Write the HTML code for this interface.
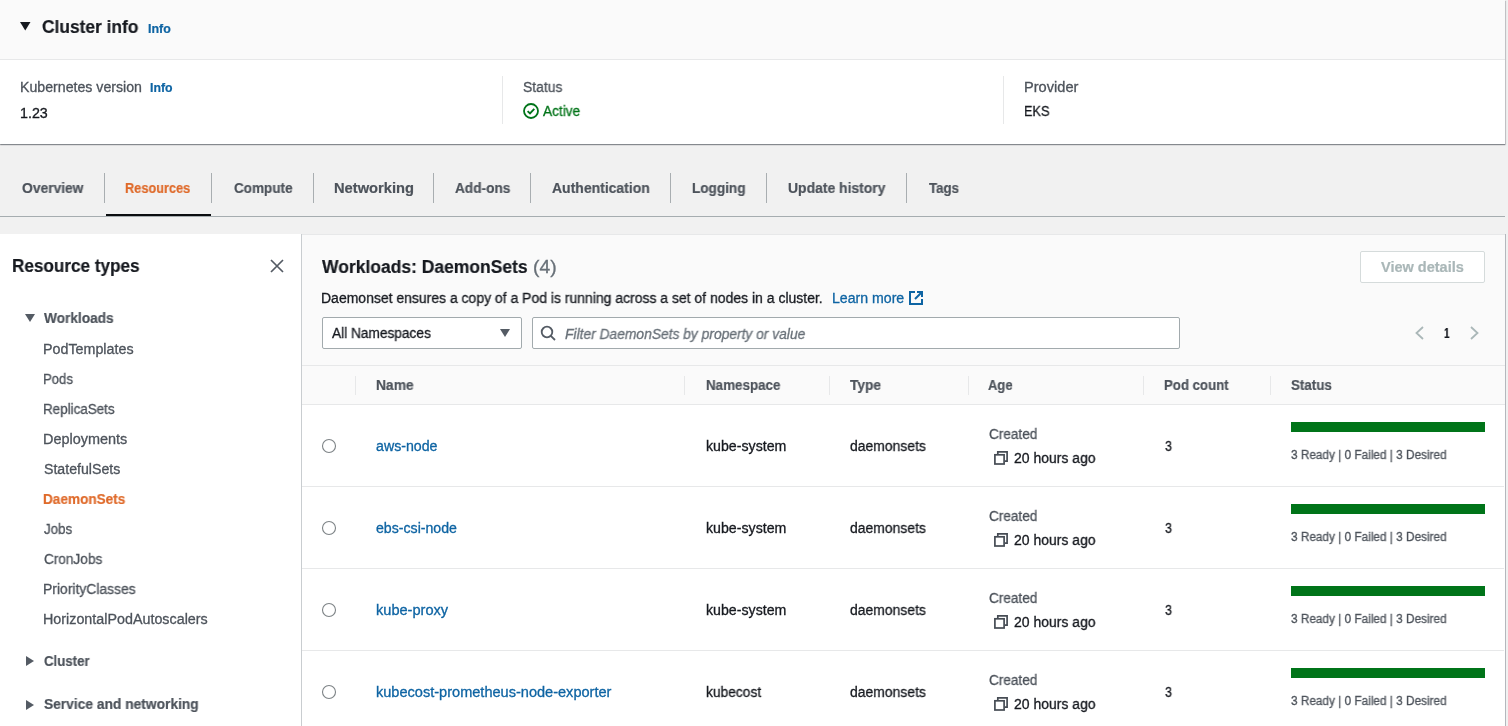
<!DOCTYPE html>
<html>
<head>
<meta charset="utf-8">
<style>
*{margin:0;padding:0;box-sizing:border-box}
html,body{width:1508px;height:726px;overflow:hidden}
body{background:#f1f1f1;font-family:"Liberation Sans",sans-serif;color:#16191f;position:relative}
.a{position:absolute;white-space:nowrap;transform-origin:0 0;will-change:transform;-webkit-text-stroke:0.2px currentColor}
.r{position:absolute}
svg{position:absolute;overflow:visible}
</style>
</head>
<body>
<!-- Cluster info container -->
<div class="r" style="left:0;top:0;width:1505px;height:144px;background:#fff;box-shadow:0 1px 1px 0 rgba(0,10,20,.35),1px 1px 1px 0 rgba(0,10,20,.15)"></div>
<div class="r" style="left:0;top:0;width:1505px;height:60px;background:#fafafa;border-bottom:1px solid #e7e8e9"></div>
<svg style="left:20px;top:22px" width="11" height="9" viewBox="0 0 11 9"><path d="M0 0H10.5L5.25 8.5Z" fill="#16191f"/></svg>
<div class="r" style="left:502px;top:76px;width:1px;height:48px;background:#e7e8e9"></div>
<div class="r" style="left:1003px;top:76px;width:1px;height:48px;background:#e7e8e9"></div>
<svg style="left:523px;top:103px" width="16" height="16" viewBox="0 0 16 16"><circle cx="8" cy="8" r="7" fill="none" stroke="#007419" stroke-width="1.8"/><path d="M4.6 8.1L7 10.4L11.3 5.9" fill="none" stroke="#007419" stroke-width="1.9"/></svg>

<!-- Tabs -->
<div class="r" style="left:0;top:216px;width:1505px;height:1px;background:#a6adb0"></div>
<div class="r" style="left:104px;top:173px;width:1px;height:30px;background:#a9aeb1"></div>
<div class="r" style="left:211px;top:173px;width:1px;height:30px;background:#a9aeb1"></div>
<div class="r" style="left:313px;top:173px;width:1px;height:30px;background:#a9aeb1"></div>
<div class="r" style="left:433px;top:173px;width:1px;height:30px;background:#a9aeb1"></div>
<div class="r" style="left:530px;top:173px;width:1px;height:30px;background:#a9aeb1"></div>
<div class="r" style="left:670px;top:173px;width:1px;height:30px;background:#a9aeb1"></div>
<div class="r" style="left:766px;top:173px;width:1px;height:30px;background:#a9aeb1"></div>
<div class="r" style="left:906px;top:173px;width:1px;height:30px;background:#a9aeb1"></div>
<div class="r" style="left:106px;top:214px;width:105px;height:2px;background:#0b0d10"></div>

<!-- Left nav panel -->
<div class="r" style="left:0;top:234px;width:301px;height:492px;background:#fff"></div>
<div class="r" style="left:301px;top:234px;width:1px;height:492px;background:#c9cdd0"></div>
<svg style="left:270px;top:259px" width="14" height="14" viewBox="0 0 14 14"><path d="M1 1L13 13M13 1L1 13" stroke="#545b64" stroke-width="1.7" fill="none"/></svg>
<svg style="left:25px;top:314px" width="10" height="8" viewBox="0 0 10 8"><path d="M0 0H10L5 8Z" fill="#545b64"/></svg>
<svg style="left:26px;top:656px" width="8" height="10" viewBox="0 0 8 10"><path d="M0 0V10L8 5Z" fill="#545b64"/></svg>
<svg style="left:26px;top:700px" width="8" height="10" viewBox="0 0 8 10"><path d="M0 0V10L8 5Z" fill="#545b64"/></svg>

<!-- Right container -->
<div class="r" style="left:302px;top:234px;width:1203px;height:492px;background:#fafafa;border-top:1px solid #e7e8e9"></div>
<div class="r" style="left:1505px;top:234px;width:1px;height:492px;background:#b4b8bd"></div>
<div class="r" style="left:1360px;top:251px;width:125px;height:32px;background:#fff;border:1px solid #d5dbdb;border-radius:2px"></div>
<svg style="left:909px;top:291px" width="14" height="14" viewBox="0 0 14 14"><path d="M6 1H1V13H13V8" fill="none" stroke="#0e64a3" stroke-width="2"/><path d="M8 1H13V6M13 1L6 8" fill="none" stroke="#0e64a3" stroke-width="2"/></svg>
<div class="r" style="left:322px;top:317px;width:200px;height:32px;background:#fff;border:1px solid #a2aaad;border-radius:2px"></div>
<svg style="left:500px;top:329px" width="10" height="8" viewBox="0 0 10 8"><path d="M0 0H10L5 8Z" fill="#545b64"/></svg>
<div class="r" style="left:532px;top:317px;width:648px;height:32px;background:#fff;border:1px solid #a2aaad;border-radius:2px"></div>
<svg style="left:540px;top:325px" width="16" height="16" viewBox="0 0 16 16"><circle cx="7" cy="7" r="5.3" fill="none" stroke="#545b64" stroke-width="1.8"/><path d="M10.8 10.8L15 15" stroke="#545b64" stroke-width="1.8"/></svg>
<svg style="left:1414px;top:326px" width="10" height="14" viewBox="0 0 10 14"><path d="M9 1L2.5 7L9 13" fill="none" stroke="#aab7b8" stroke-width="1.8"/></svg>
<svg style="left:1470px;top:326px" width="10" height="14" viewBox="0 0 10 14"><path d="M1 1L7.5 7L1 13" fill="none" stroke="#aab7b8" stroke-width="1.8"/></svg>

<!-- Table -->
<div class="r" style="left:302px;top:365px;width:1203px;height:1px;background:#e7e8e9"></div>
<div class="r" style="left:302px;top:404px;width:1203px;height:322px;background:#fff;border-top:1px solid #e7e8e9"></div>
<div class="r" style="left:355px;top:376px;width:1px;height:19px;background:#e7e8e9"></div>
<div class="r" style="left:684px;top:376px;width:1px;height:19px;background:#e7e8e9"></div>
<div class="r" style="left:829px;top:376px;width:1px;height:19px;background:#e7e8e9"></div>
<div class="r" style="left:968px;top:376px;width:1px;height:19px;background:#e7e8e9"></div>
<div class="r" style="left:1143px;top:376px;width:1px;height:19px;background:#e7e8e9"></div>
<div class="r" style="left:1270px;top:376px;width:1px;height:19px;background:#e7e8e9"></div>
<svg style="left:322px;top:439px" width="14" height="14" viewBox="0 0 14 14"><circle cx="7" cy="7" r="6.5" fill="#fff" stroke="#7d8386" stroke-width="1.1"/></svg>
<svg style="left:994px;top:451px" width="14" height="14" viewBox="0 0 14 14"><path d="M3.8 3V0.9H13.1V10.2H10.9" fill="none" stroke="#464c54" stroke-width="1.7"/><rect x="0.9" y="3.8" width="9.2" height="9.2" fill="none" stroke="#464c54" stroke-width="1.7"/></svg>
<div class="r" style="left:1291px;top:422px;width:194px;height:10px;background:#007419"></div>
<div class="r" style="left:302px;top:486px;width:1202px;height:1px;background:#e7e8e9"></div>
<svg style="left:322px;top:521px" width="14" height="14" viewBox="0 0 14 14"><circle cx="7" cy="7" r="6.5" fill="#fff" stroke="#7d8386" stroke-width="1.1"/></svg>
<svg style="left:994px;top:533px" width="14" height="14" viewBox="0 0 14 14"><path d="M3.8 3V0.9H13.1V10.2H10.9" fill="none" stroke="#464c54" stroke-width="1.7"/><rect x="0.9" y="3.8" width="9.2" height="9.2" fill="none" stroke="#464c54" stroke-width="1.7"/></svg>
<div class="r" style="left:1291px;top:504px;width:194px;height:10px;background:#007419"></div>
<div class="r" style="left:302px;top:568px;width:1202px;height:1px;background:#e7e8e9"></div>
<svg style="left:322px;top:603px" width="14" height="14" viewBox="0 0 14 14"><circle cx="7" cy="7" r="6.5" fill="#fff" stroke="#7d8386" stroke-width="1.1"/></svg>
<svg style="left:994px;top:615px" width="14" height="14" viewBox="0 0 14 14"><path d="M3.8 3V0.9H13.1V10.2H10.9" fill="none" stroke="#464c54" stroke-width="1.7"/><rect x="0.9" y="3.8" width="9.2" height="9.2" fill="none" stroke="#464c54" stroke-width="1.7"/></svg>
<div class="r" style="left:1291px;top:586px;width:194px;height:10px;background:#007419"></div>
<div class="r" style="left:302px;top:650px;width:1202px;height:1px;background:#e7e8e9"></div>
<svg style="left:322px;top:685px" width="14" height="14" viewBox="0 0 14 14"><circle cx="7" cy="7" r="6.5" fill="#fff" stroke="#7d8386" stroke-width="1.1"/></svg>
<svg style="left:994px;top:697px" width="14" height="14" viewBox="0 0 14 14"><path d="M3.8 3V0.9H13.1V10.2H10.9" fill="none" stroke="#464c54" stroke-width="1.7"/><rect x="0.9" y="3.8" width="9.2" height="9.2" fill="none" stroke="#464c54" stroke-width="1.7"/></svg>
<div class="r" style="left:1291px;top:668px;width:194px;height:10px;background:#007419"></div>

<div class="a" style="left:42.00px;top:18px;font-size:18px;line-height:18px;color:#16191f;font-weight:700;transform:scaleX(0.9638);">Cluster info</div>
<div class="a" style="left:148.00px;top:23px;font-size:12px;line-height:12px;color:#0e64a3;font-weight:700;transform:scaleX(1.0369);">Info</div>
<div class="a" style="left:19.76px;top:80px;font-size:14px;line-height:14px;color:#4d535b;-webkit-text-stroke:0.3px currentColor;transform:scaleX(1.0109);">Kubernetes version</div>
<div class="a" style="left:150.00px;top:82px;font-size:12px;line-height:12px;color:#0e64a3;font-weight:700;transform:scaleX(1.0232);">Info</div>
<div class="a" style="left:20.20px;top:106px;font-size:14px;line-height:14px;color:#16191f;-webkit-text-stroke:0.3px currentColor;transform:scaleX(1.0196);">1.23</div>
<div class="a" style="left:523.00px;top:80px;font-size:14px;line-height:14px;color:#4d535b;-webkit-text-stroke:0.3px currentColor;transform:scaleX(0.9901);">Status</div>
<div class="a" style="left:543.22px;top:104px;font-size:14px;line-height:14px;color:#007419;-webkit-text-stroke:0.3px currentColor;transform:scaleX(0.9765);">Active</div>
<div class="a" style="left:1023.76px;top:80px;font-size:14px;line-height:14px;color:#4d535b;-webkit-text-stroke:0.3px currentColor;transform:scaleX(1.0432);">Provider</div>
<div class="a" style="left:1023.76px;top:104px;font-size:14px;line-height:14px;color:#16191f;-webkit-text-stroke:0.3px currentColor;transform:scaleX(0.9085);">EKS</div>
<div class="a" style="left:22.12px;top:181px;font-size:14px;line-height:14px;color:#4d535b;font-weight:700;transform:scaleX(0.9874);">Overview</div>
<div class="a" style="left:125.08px;top:181px;font-size:14px;line-height:14px;color:#df6a2a;font-weight:700;transform:scaleX(0.9109);">Resources</div>
<div class="a" style="left:234.12px;top:181px;font-size:14px;line-height:14px;color:#4d535b;font-weight:700;transform:scaleX(0.9640);">Compute</div>
<div class="a" style="left:333.86px;top:181px;font-size:14px;line-height:14px;color:#4d535b;font-weight:700;transform:scaleX(1.0493);">Networking</div>
<div class="a" style="left:454.66px;top:181px;font-size:14px;line-height:14px;color:#4d535b;font-weight:700;transform:scaleX(0.9738);">Add-ons</div>
<div class="a" style="left:552.00px;top:181px;font-size:14px;line-height:14px;color:#4d535b;font-weight:700;transform:scaleX(0.9969);">Authentication</div>
<div class="a" style="left:692.22px;top:181px;font-size:14px;line-height:14px;color:#4d535b;font-weight:700;transform:scaleX(0.9691);">Logging</div>
<div class="a" style="left:788.10px;top:181px;font-size:14px;line-height:14px;color:#4d535b;font-weight:700;transform:scaleX(0.9939);">Update history</div>
<div class="a" style="left:928.56px;top:181px;font-size:14px;line-height:14px;color:#4d535b;font-weight:700;transform:scaleX(0.9485);">Tags</div>
<div class="a" style="left:11.64px;top:257px;font-size:18px;line-height:18px;color:#16191f;font-weight:700;transform:scaleX(0.9516);">Resource types</div>
<div class="a" style="left:43.78px;top:311px;font-size:14px;line-height:14px;color:#4d535b;font-weight:700;transform:scaleX(0.9761);">Workloads</div>
<div class="a" style="left:43.30px;top:342px;font-size:14px;line-height:14px;color:#4d535b;-webkit-text-stroke:0.3px currentColor;transform:scaleX(1.0205);">PodTemplates</div>
<div class="a" style="left:43.30px;top:372px;font-size:14px;line-height:14px;color:#4d535b;-webkit-text-stroke:0.3px currentColor;transform:scaleX(0.9390);">Pods</div>
<div class="a" style="left:43.30px;top:402px;font-size:14px;line-height:14px;color:#4d535b;-webkit-text-stroke:0.3px currentColor;transform:scaleX(0.9578);">ReplicaSets</div>
<div class="a" style="left:43.30px;top:432px;font-size:14px;line-height:14px;color:#4d535b;-webkit-text-stroke:0.3px currentColor;transform:scaleX(1.0321);">Deployments</div>
<div class="a" style="left:44.10px;top:462px;font-size:14px;line-height:14px;color:#4d535b;-webkit-text-stroke:0.3px currentColor;transform:scaleX(1.0107);">StatefulSets</div>
<div class="a" style="left:43.30px;top:492px;font-size:14px;line-height:14px;color:#df6a2a;font-weight:700;transform:scaleX(0.9700);">DaemonSets</div>
<div class="a" style="left:44.10px;top:522px;font-size:14px;line-height:14px;color:#4d535b;-webkit-text-stroke:0.3px currentColor;transform:scaleX(0.9552);">Jobs</div>
<div class="a" style="left:44.10px;top:552px;font-size:14px;line-height:14px;color:#4d535b;-webkit-text-stroke:0.3px currentColor;transform:scaleX(0.9717);">CronJobs</div>
<div class="a" style="left:43.30px;top:582px;font-size:14px;line-height:14px;color:#4d535b;-webkit-text-stroke:0.3px currentColor;transform:scaleX(0.9935);">PriorityClasses</div>
<div class="a" style="left:43.30px;top:612px;font-size:14px;line-height:14px;color:#4d535b;-webkit-text-stroke:0.3px currentColor;transform:scaleX(1.0225);">HorizontalPodAutoscalers</div>
<div class="a" style="left:44.12px;top:654px;font-size:14px;line-height:14px;color:#4d535b;font-weight:700;transform:scaleX(0.9459);">Cluster</div>
<div class="a" style="left:44.12px;top:697px;font-size:14px;line-height:14px;color:#4d535b;font-weight:700;transform:scaleX(0.9841);">Service and networking</div>
<div class="a" style="left:322.10px;top:258px;font-size:18px;line-height:18px;color:#16191f;font-weight:700;transform:scaleX(0.9709);">Workloads: DaemonSets</div>
<div class="a" style="left:533.00px;top:258px;font-size:18px;line-height:18px;color:#687078;-webkit-text-stroke:0.3px currentColor;transform:scaleX(1.0719);">(4)</div>
<div class="a" style="left:321.30px;top:291px;font-size:14px;line-height:14px;color:#16191f;-webkit-text-stroke:0.3px currentColor;transform:scaleX(0.9978);">Daemonset ensures a copy of a Pod is running across a set of nodes in a cluster.</div>
<div class="a" style="left:831.98px;top:291px;font-size:14px;line-height:14px;color:#0e64a3;-webkit-text-stroke:0.3px currentColor;transform:scaleX(1.0087);">Learn more</div>
<div class="a" style="left:1381.22px;top:260px;font-size:14px;line-height:14px;color:#aab7b8;font-weight:700;transform:scaleX(1.0368);">View details</div>
<div class="a" style="left:331.56px;top:326px;font-size:14px;line-height:14px;color:#16191f;-webkit-text-stroke:0.3px currentColor;transform:scaleX(0.9772);">All Namespaces</div>
<div class="a" style="left:565.44px;top:327px;font-size:14px;line-height:14px;color:#687078;-webkit-text-stroke:0.3px currentColor;font-style:italic;transform:scaleX(0.9868);">Filter DaemonSets by property or value</div>
<div class="a" style="left:1444.12px;top:326px;font-size:14px;line-height:14px;color:#16191f;font-weight:700;transform:scaleX(0.7093);">1</div>
<div class="a" style="left:376.10px;top:378px;font-size:14px;line-height:14px;color:#4d535b;font-weight:700;transform:scaleX(0.9870);">Name</div>
<div class="a" style="left:706.12px;top:378px;font-size:14px;line-height:14px;color:#4d535b;font-weight:700;transform:scaleX(0.9559);">Namespace</div>
<div class="a" style="left:850.00px;top:378px;font-size:14px;line-height:14px;color:#4d535b;font-weight:700;transform:scaleX(0.9808);">Type</div>
<div class="a" style="left:988.44px;top:378px;font-size:14px;line-height:14px;color:#4d535b;font-weight:700;transform:scaleX(0.9273);">Age</div>
<div class="a" style="left:1164.10px;top:378px;font-size:14px;line-height:14px;color:#4d535b;font-weight:700;transform:scaleX(0.9441);">Pod count</div>
<div class="a" style="left:1291.00px;top:378px;font-size:14px;line-height:14px;color:#4d535b;font-weight:700;transform:scaleX(0.9535);">Status</div>
<div class="a" style="left:375.78px;top:439px;font-size:14px;line-height:14px;color:#0e64a3;-webkit-text-stroke:0.3px currentColor;transform:scaleX(1.0132);">aws-node</div>
<div class="a" style="left:705.78px;top:439px;font-size:14px;line-height:14px;color:#16191f;-webkit-text-stroke:0.3px currentColor;transform:scaleX(1.0127);">kube-system</div>
<div class="a" style="left:850.12px;top:439px;font-size:14px;line-height:14px;color:#16191f;-webkit-text-stroke:0.3px currentColor;transform:scaleX(0.9948);">daemonsets</div>
<div class="a" style="left:989.44px;top:427px;font-size:14px;line-height:14px;color:#4d535b;-webkit-text-stroke:0.3px currentColor;transform:scaleX(0.9716);">Created</div>
<div class="a" style="left:1013.78px;top:451px;font-size:14px;line-height:14px;color:#16191f;-webkit-text-stroke:0.3px currentColor;transform:scaleX(0.9976);">20 hours ago</div>
<div class="a" style="left:1164.66px;top:439px;font-size:14px;line-height:14px;color:#16191f;-webkit-text-stroke:0.3px currentColor;transform:scaleX(0.8951);">3</div>
<div class="a" style="left:1291.44px;top:449px;font-size:12px;line-height:12px;color:#4d535b;-webkit-text-stroke:0.3px currentColor;transform:scaleX(0.9828);">3 Ready | 0 Failed | 3 Desired</div>
<div class="a" style="left:375.78px;top:521px;font-size:14px;line-height:14px;color:#0e64a3;-webkit-text-stroke:0.3px currentColor;transform:scaleX(1.0100);">ebs-csi-node</div>
<div class="a" style="left:705.78px;top:521px;font-size:14px;line-height:14px;color:#16191f;-webkit-text-stroke:0.3px currentColor;transform:scaleX(1.0127);">kube-system</div>
<div class="a" style="left:850.12px;top:521px;font-size:14px;line-height:14px;color:#16191f;-webkit-text-stroke:0.3px currentColor;transform:scaleX(0.9948);">daemonsets</div>
<div class="a" style="left:989.44px;top:509px;font-size:14px;line-height:14px;color:#4d535b;-webkit-text-stroke:0.3px currentColor;transform:scaleX(0.9716);">Created</div>
<div class="a" style="left:1013.78px;top:533px;font-size:14px;line-height:14px;color:#16191f;-webkit-text-stroke:0.3px currentColor;transform:scaleX(0.9976);">20 hours ago</div>
<div class="a" style="left:1164.66px;top:521px;font-size:14px;line-height:14px;color:#16191f;-webkit-text-stroke:0.3px currentColor;transform:scaleX(0.8951);">3</div>
<div class="a" style="left:1291.44px;top:531px;font-size:12px;line-height:12px;color:#4d535b;-webkit-text-stroke:0.3px currentColor;transform:scaleX(0.9828);">3 Ready | 0 Failed | 3 Desired</div>
<div class="a" style="left:375.78px;top:603px;font-size:14px;line-height:14px;color:#0e64a3;-webkit-text-stroke:0.3px currentColor;transform:scaleX(1.0415);">kube-proxy</div>
<div class="a" style="left:705.78px;top:603px;font-size:14px;line-height:14px;color:#16191f;-webkit-text-stroke:0.3px currentColor;transform:scaleX(1.0127);">kube-system</div>
<div class="a" style="left:850.12px;top:603px;font-size:14px;line-height:14px;color:#16191f;-webkit-text-stroke:0.3px currentColor;transform:scaleX(0.9948);">daemonsets</div>
<div class="a" style="left:989.44px;top:591px;font-size:14px;line-height:14px;color:#4d535b;-webkit-text-stroke:0.3px currentColor;transform:scaleX(0.9716);">Created</div>
<div class="a" style="left:1013.78px;top:615px;font-size:14px;line-height:14px;color:#16191f;-webkit-text-stroke:0.3px currentColor;transform:scaleX(0.9976);">20 hours ago</div>
<div class="a" style="left:1164.66px;top:603px;font-size:14px;line-height:14px;color:#16191f;-webkit-text-stroke:0.3px currentColor;transform:scaleX(0.8951);">3</div>
<div class="a" style="left:1291.44px;top:613px;font-size:12px;line-height:12px;color:#4d535b;-webkit-text-stroke:0.3px currentColor;transform:scaleX(0.9828);">3 Ready | 0 Failed | 3 Desired</div>
<div class="a" style="left:375.78px;top:685px;font-size:14px;line-height:14px;color:#0e64a3;-webkit-text-stroke:0.3px currentColor;transform:scaleX(1.0396);">kubecost-prometheus-node-exporter</div>
<div class="a" style="left:705.78px;top:685px;font-size:14px;line-height:14px;color:#16191f;-webkit-text-stroke:0.3px currentColor;transform:scaleX(0.9843);">kubecost</div>
<div class="a" style="left:850.12px;top:685px;font-size:14px;line-height:14px;color:#16191f;-webkit-text-stroke:0.3px currentColor;transform:scaleX(0.9948);">daemonsets</div>
<div class="a" style="left:989.44px;top:673px;font-size:14px;line-height:14px;color:#4d535b;-webkit-text-stroke:0.3px currentColor;transform:scaleX(0.9716);">Created</div>
<div class="a" style="left:1013.78px;top:697px;font-size:14px;line-height:14px;color:#16191f;-webkit-text-stroke:0.3px currentColor;transform:scaleX(0.9976);">20 hours ago</div>
<div class="a" style="left:1164.66px;top:685px;font-size:14px;line-height:14px;color:#16191f;-webkit-text-stroke:0.3px currentColor;transform:scaleX(0.8951);">3</div>
<div class="a" style="left:1291.44px;top:695px;font-size:12px;line-height:12px;color:#4d535b;-webkit-text-stroke:0.3px currentColor;transform:scaleX(0.9828);">3 Ready | 0 Failed | 3 Desired</div>
</body>
</html>
